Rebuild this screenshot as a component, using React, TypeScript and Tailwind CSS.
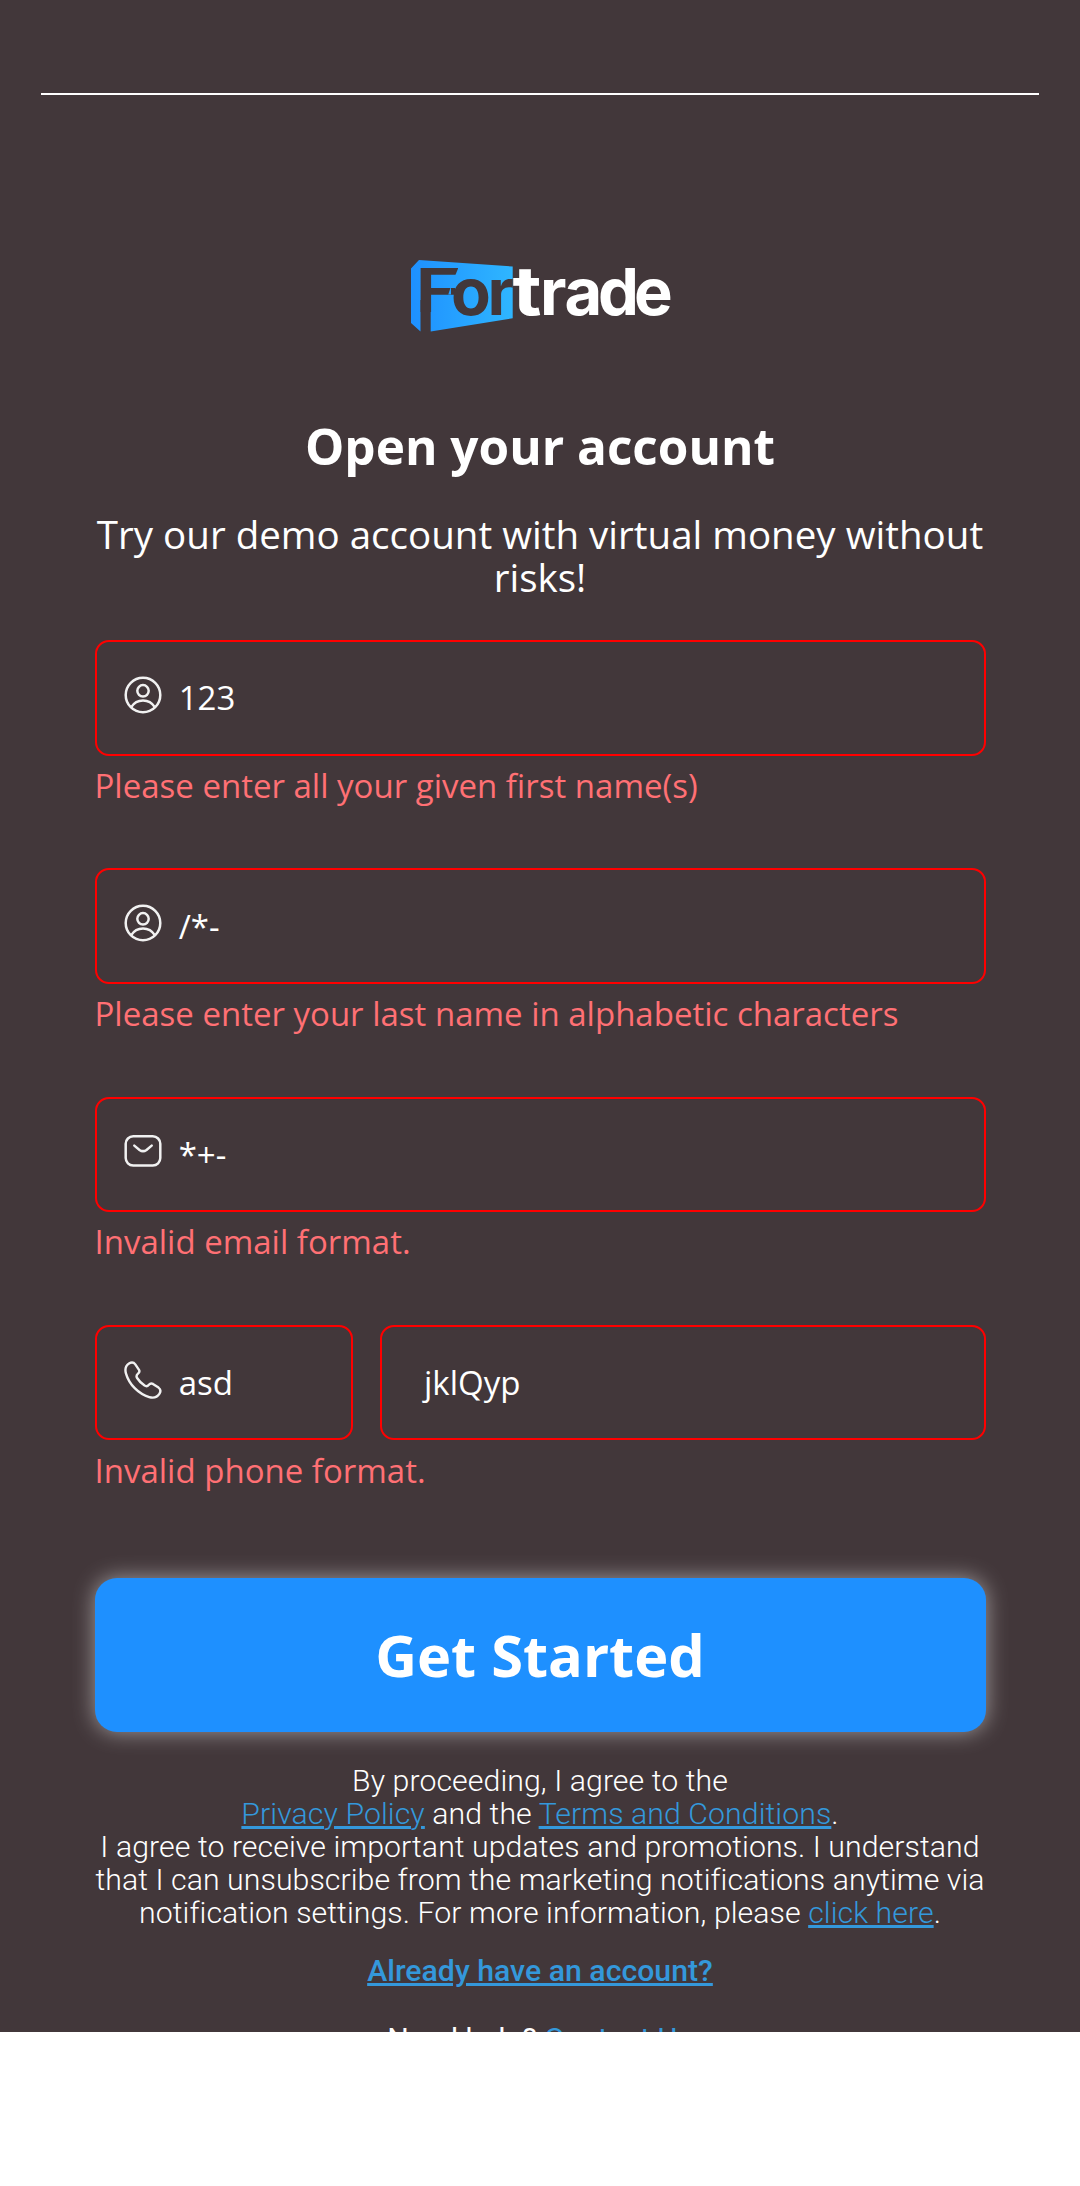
import type { ReactNode } from "react";

function Logo() {
  return (
    <svg
      width="262"
      height="76"
      viewBox="409 258 262 76"
      role="img"
      aria-label="Fortrade"
      className="block overflow-visible"
    >
      <defs>
        <linearGradient id="panel" gradientUnits="userSpaceOnUse" x1="411" x2="513" y1="0" y2="0">
          <stop offset="0" stopColor="#1e90ff" />
          <stop offset="1" stopColor="#2fb6ff" />
        </linearGradient>
      </defs>
      <path
        fill="url(#panel)"
        d="M411 268.5 419 260 512.7 266.5V318.3L430.7 331.5V300H420.5V331.5L411 323Z"
      />
      <g fontFamily="Inter" fontWeight="700" fontSize="65" fill="#42373a">
        <text fontWeight="600" transform="translate(414.8 311.8) scale(1.235 .94)">
          F
        </text>
        <path fill="url(#panel)" d="M458.7 267V276H455Z" />
        <path fill="url(#panel)" d="M451 286V294.5H448.3Z" />
        <text x="451" y="315">
          o
        </text>
        <text x="487.5" y="315">
          r
        </text>
        <g fill="#fff">
          <text transform="translate(512.5 315) scale(1.22 1.05)">t</text>
          <text x="540" y="315">
            r
          </text>
          <text x="564.5" y="315">
            a
          </text>
          <text x="598" y="315">
            d
          </text>
          <text x="634" y="315">
            e
          </text>
        </g>
      </g>
    </svg>
  );
}

function PersonIcon() {
  return (
    <svg width="38" height="38" viewBox="0 0 38 38" fill="none" stroke="#f1f1f1" strokeWidth="2.5">
      <circle cx="19" cy="19" r="17.3" />
      <circle cx="19" cy="14.8" r="5.7" />
      <path d="M7 31.3C10 26.6 14.2 24.4 19 24.4S28 26.6 31 31.3" />
    </svg>
  );
}

function MailIcon() {
  return (
    <svg
      width="38"
      height="38"
      viewBox="0 0 38 38"
      fill="none"
      stroke="#f1f1f1"
      strokeWidth="2.5"
      strokeLinecap="round"
    >
      <rect x="1.7" y="4.3" width="34.6" height="29.2" rx="7.5" />
      <path d="M10.3 13.6 15.5 17.9Q19 20.4 22.5 17.9L27.7 13.6" />
    </svg>
  );
}

function PhoneIcon() {
  return (
    <svg
      width="38"
      height="38"
      viewBox="0 0 38 38"
      fill="none"
      stroke="#f1f1f1"
      strokeWidth="2.4"
      strokeLinejoin="round"
    >
      <path d="M5 2.6C7.2 1.2 9.8 1.4 11.3 3.4L15 8.9C15.9 10.4 15.3 11.6 14 12.7C12.3 14.1 12 15.2 13.1 17C15 20 17.6 22.6 20.6 24.6C22.4 25.7 23.5 25.4 24.9 23.7C26.1 22.3 27.4 22 28.9 22.9L34.5 26.6C36.7 28.2 36.8 30.5 35.5 32.7C33.3 36.2 29.6 37.4 25.2 36.1C14.3 32.8 5.2 23.5 2 12.6C.8 8.5 1.8 4.7 5 2.6Z" />
    </svg>
  );
}

function Field({ icon, value, className }: { icon?: ReactNode; value: string; className: string }) {
  return (
    <div
      className={`flex h-[115.5px] items-center rounded-[14px] border-2 border-[#ff0000] text-[33px] leading-[45px] text-white ${className}`}
    >
      {icon && <span className="mr-[17px] mb-[6px] ml-[27.2px] shrink-0">{icon}</span>}
      <span className={icon ? "" : "ml-[42px]"}>{value}</span>
    </div>
  );
}

function FieldGroup({ error, children }: { error: string; children: ReactNode }) {
  return (
    <div className="h-[228.3px]">
      <div className="flex justify-between">{children}</div>
      <p className="mt-[7.2px] text-[33px] leading-[45px] text-[#ff7074]">{error}</p>
    </div>
  );
}

function Link({ children }: { children: ReactNode }) {
  return (
    <a href="#" className="text-[#3498db] underline decoration-[3px] underline-offset-[2px]">
      {children}
    </a>
  );
}

export default function App() {
  return (
    <div className="min-h-[2186px] w-[1080px] bg-white">
      <main className="h-[2032px] overflow-hidden bg-[#42373a] font-['Open_Sans',sans-serif] text-white">
        <div className="mx-[41px] pt-[93px]">
          <div className="h-[2px] bg-white" />
        </div>
        <div className="mx-auto flex w-[891px] flex-col">
          <div className="mt-[163px] ml-[314.5px]">
            <Logo />
          </div>
          <h1 className="mt-[82px] text-center text-[49.5px] leading-[60px] font-bold">
            Open your account
          </h1>
          <p className="mt-[37px] text-center text-[38.5px] leading-[43px] tracking-[0.01px]">
            Try our demo account with virtual money without risks!
          </p>
          <form className="mt-[41px] flex flex-col">
            <FieldGroup error="Please enter all your given first name(s)">
              <Field icon={<PersonIcon />} value="123" className="w-full" />
            </FieldGroup>
            <FieldGroup error="Please enter your last name in alphabetic characters">
              <Field icon={<PersonIcon />} value="/*-" className="w-full" />
            </FieldGroup>
            <FieldGroup error="Invalid email format.">
              <Field icon={<MailIcon />} value="*+-" className="w-full" />
            </FieldGroup>
            <FieldGroup error="Invalid phone format.">
              <Field icon={<PhoneIcon />} value="asd" className="w-[258px]" />
              <Field value="jklQyp" className="w-[605.5px]" />
            </FieldGroup>
            <button
              type="button"
              className="mt-[24.8px] h-[154px] rounded-[22px] bg-[#1e90ff] text-[57.75px] leading-[78px] font-bold text-white shadow-[0_0_22px_rgba(255,255,255,0.5)]"
            >
              Get Started
            </button>
          </form>
          <p className="mt-[32px] text-center font-[Roboto,sans-serif] text-[30.25px] leading-[33px] font-light tracking-[0.07px]">
            By proceeding, I agree to the
            <br />
            <Link>Privacy Policy</Link> and the <Link>Terms and Conditions</Link>.
            <br />I agree to receive important updates and promotions. I understand that I can
            unsubscribe from the marketing notifications anytime via notification settings. For more
            information, please <Link>click here</Link>.
          </p>
          <p className="mt-[25.2px] text-center font-[Roboto,sans-serif] text-[30.25px] leading-[33px] font-medium">
            <Link>Already have an account?</Link>
          </p>
          <p className="mt-[34.5px] text-center font-[Roboto,sans-serif] text-[30.25px] leading-[33px]">
            Need help? <Link>Contact Us</Link>
          </p>
        </div>
      </main>
    </div>
  );
}
